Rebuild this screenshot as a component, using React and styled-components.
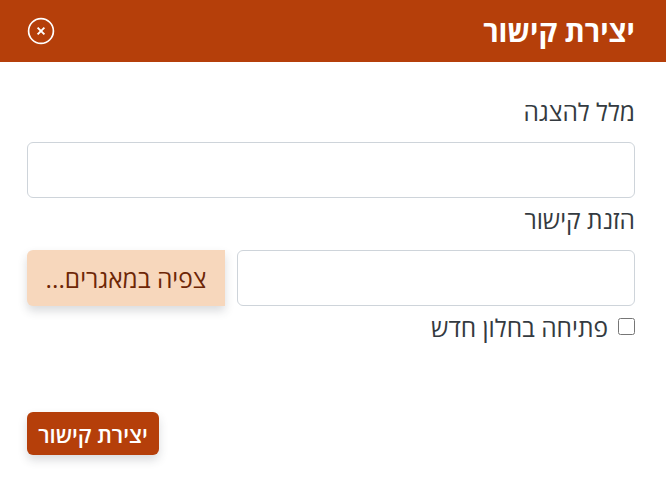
import styled, { createGlobalStyle } from "styled-components";

const GlobalStyle = createGlobalStyle`
  html, body {
    margin: 0;
    padding: 0;
    background: #fff;
  }
  * {
    box-sizing: border-box;
  }
`;

const App = () => {
  return (
    <Dialog dir="rtl">
      <GlobalStyle />
      <Header>
        <Title>יצירת קישור</Title>
        <CloseButton aria-label="סגירה">
          <svg width="28" height="28" viewBox="0 0 28 28" fill="none" stroke="#fff">
            <circle cx="14" cy="14" r="12.4" strokeWidth="1.7" />
            <path d="M10.6 10.6 17.4 17.4 M17.4 10.6 10.6 17.4" strokeWidth="1.9" />
          </svg>
        </CloseButton>
      </Header>
      <Body>
        <Label>מלל להצגה</Label>
        <TextInput type="text" />
        <Label $tight>הזנת קישור</Label>
        <InputGroup>
          <TextInput type="text" />
          <BrowseButton>צפיה במאגרים...</BrowseButton>
        </InputGroup>
        <CheckRow>
          <CheckBox type="checkbox" />
          <span>פתיחה בחלון חדש</span>
        </CheckRow>
        <Footer>
          <SubmitButton>יצירת קישור</SubmitButton>
        </Footer>
      </Body>
    </Dialog>
  );
};

export default App;

const Dialog = styled.div`
  width: 666px;
  height: 481px;
  overflow: hidden;
  font-family: "Open Sans", sans-serif;
  color: #343a40;
`;

const Header = styled.div`
  height: 62px;
  background: #b53f0a;
  display: flex;
  align-items: center;
  justify-content: space-between;
  padding: 0 31px 0 27px;
`;

const Title = styled.h1`
  margin: 0;
  font-size: 29px;
  font-weight: 700;
  line-height: 36px;
  color: #fff;
`;

const CloseButton = styled.button`
  width: 28px;
  height: 28px;
  padding: 0;
  border: 0;
  background: none;
  display: flex;
`;

const Body = styled.div`
  padding: 34px 31px 0 27px;
  display: flex;
  flex-direction: column;
`;

const Label = styled.label`
  font-size: 24.5px;
  line-height: 32px;
  height: ${(p) => (p.$tight ? "52px" : "46px")};
  padding-top: ${(p) => (p.$tight ? "6px" : "0")};
`;

const TextInput = styled.input`
  width: 100%;
  min-width: 0;
  height: 56px;
  border: 1px solid #ced4da;
  border-radius: 6px;
  background: #fff;
`;

const InputGroup = styled.div`
  display: flex;
  gap: 12px;
`;

const BrowseButton = styled.button`
  flex: none;
  width: 198px;
  height: 56px;
  border: 0;
  border-radius: 6px 0 0 6px;
  background: #f7d7bc;
  color: #6d2606;
  font-family: inherit;
  font-size: 24.5px;
  box-shadow: 0 5px 10px rgba(52, 58, 64, 0.18);
`;

const CheckRow = styled.label`
  display: flex;
  align-items: center;
  gap: 10px;
  margin-top: 6px;
  font-size: 24.5px;
  line-height: 32px;
`;

const CheckBox = styled.input`
  width: 17px;
  height: 17px;
  margin: 0 0 4px;
`;

const Footer = styled.div`
  display: flex;
  justify-content: flex-end;
  margin-top: 68px;
`;

const SubmitButton = styled.button`
  width: 132px;
  height: 43px;
  border: 0;
  border-radius: 6px;
  background: #b53f0a;
  color: #fff;
  font-family: inherit;
  font-size: 22px;
  font-weight: 600;
  box-shadow: 0 5px 10px rgba(52, 58, 64, 0.18);
`;
